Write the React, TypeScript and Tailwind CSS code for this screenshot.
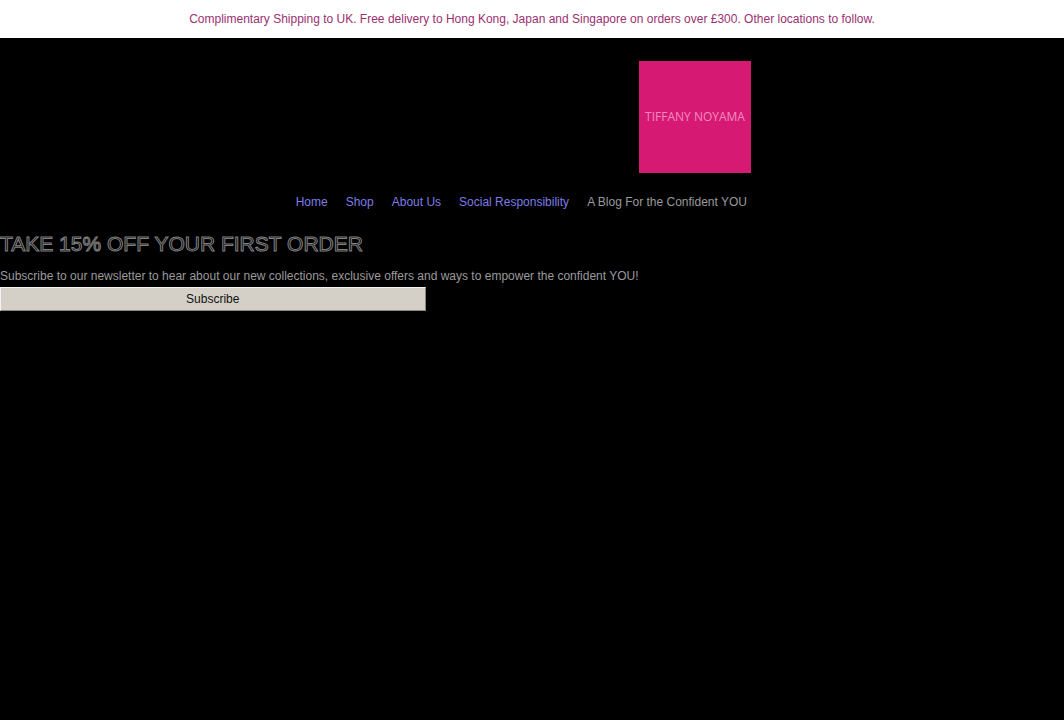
const links = [
    { label: "Home", href: "#home" },
    { label: "Shop", href: "#shop" },
    { label: "About Us", href: "#about" },
    { label: "Social Responsibility", href: "#responsibility" },
]

export default function App() {
    return (
        <div className="min-h-screen bg-black font-['Liberation_Sans',Arial,sans-serif] text-xs">
            {/* Announcement */}
            <p className="bg-white px-4 py-[11px] text-center text-[#9b3070]">
                Complimentary Shipping to UK. Free delivery to Hong Kong, Japan and
                Singapore on orders over £300. Other locations to follow.
            </p>

            <header className="flex max-w-[751px] flex-col items-end pt-[23px]">
                <a
                    href="#home"
                    className="flex h-28 w-28 items-center justify-center bg-[#d61a74] font-['Open_Sans',sans-serif] whitespace-nowrap text-[#f28abf]"
                >
                    TIFFANY NOYAMA
                </a>

                <nav className="mt-[21px] flex gap-[18px] pr-1">
                    {links.map((link) => (
                        <a key={link.label} href={link.href} className="text-[#7c7ce6]">
                            {link.label}
                        </a>
                    ))}
                    <span className="text-[#9a9a9a]">A Blog For the Confident YOU</span>
                </nav>
            </header>

            {/* Newsletter */}
            <main className="pt-[22px]">
                <h1 className="text-[21px] leading-6 text-black [-webkit-text-stroke:1px_#808080]">
                    TAKE 15% OFF YOUR FIRST ORDER
                </h1>
                <p className="mt-3 text-[#9a9a9a]">
                    Subscribe to our newsletter to hear about our new collections,
                    exclusive offers and ways to empower the confident YOU!
                </p>
                <button className="mt-[3px] h-6 w-2/5 border border-t-[#f4f3ef] border-r-[#89867c] border-b-[#89867c] border-l-[#f4f3ef] bg-[#d4d0c8] text-[#111111]">
                    Subscribe
                </button>
            </main>
        </div>
    )
}
